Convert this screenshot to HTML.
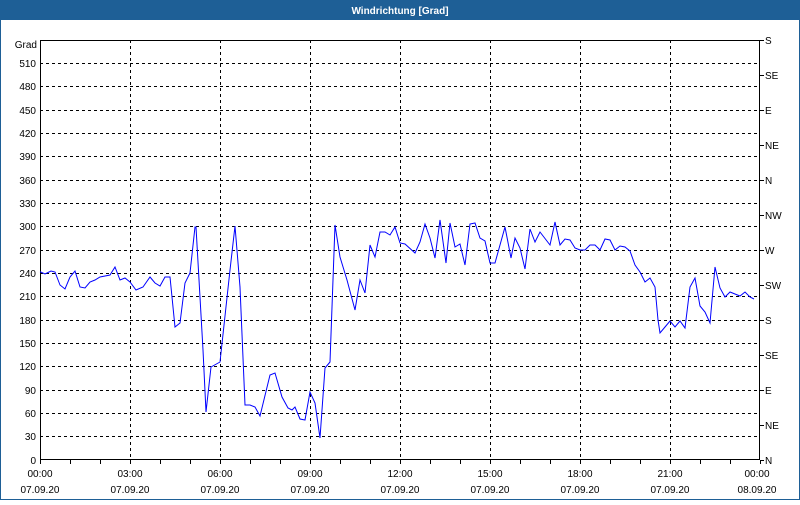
<!DOCTYPE html>
<html><head><meta charset="utf-8"><style>
body{margin:0;width:800px;height:500px;overflow:hidden;background:#fff;font-family:"Liberation Sans",sans-serif}
</style></head><body>
<svg width="800" height="500" xmlns="http://www.w3.org/2000/svg" font-family="Liberation Sans, sans-serif" font-size="10">
<rect x="0" y="0" width="800" height="500" fill="#fff"/>
<rect x="0.5" y="0.5" width="799" height="499" fill="none" stroke="#1e5f96"/>
<rect x="0" y="0" width="800" height="20" fill="#1e5f96"/>
<text x="400" y="14" text-anchor="middle" fill="#fff" font-weight="bold" font-size="10">Windrichtung [Grad]</text>
<g stroke="#000" stroke-dasharray="3,3" stroke-width="1">
<line x1="40" x2="760" y1="436.5" y2="436.5"/><line x1="40" x2="760" y1="413.5" y2="413.5"/>
<line x1="40" x2="760" y1="390.5" y2="390.5"/><line x1="40" x2="760" y1="366.5" y2="366.5"/>
<line x1="40" x2="760" y1="343.5" y2="343.5"/><line x1="40" x2="760" y1="320.5" y2="320.5"/>
<line x1="40" x2="760" y1="296.5" y2="296.5"/><line x1="40" x2="760" y1="273.5" y2="273.5"/>
<line x1="40" x2="760" y1="250.5" y2="250.5"/><line x1="40" x2="760" y1="226.5" y2="226.5"/>
<line x1="40" x2="760" y1="203.5" y2="203.5"/><line x1="40" x2="760" y1="180.5" y2="180.5"/>
<line x1="40" x2="760" y1="156.5" y2="156.5"/><line x1="40" x2="760" y1="133.5" y2="133.5"/>
<line x1="40" x2="760" y1="110.5" y2="110.5"/><line x1="40" x2="760" y1="86.5" y2="86.5"/>
<line x1="40" x2="760" y1="63.5" y2="63.5"/>
<line y1="40" y2="460" x1="130.5" x2="130.5"/><line y1="40" y2="460" x1="220.5" x2="220.5"/>
<line y1="40" y2="460" x1="310.5" x2="310.5"/><line y1="40" y2="460" x1="400.5" x2="400.5"/>
<line y1="40" y2="460" x1="490.5" x2="490.5"/><line y1="40" y2="460" x1="580.5" x2="580.5"/>
<line y1="40" y2="460" x1="670.5" x2="670.5"/>
</g>
<rect x="40.5" y="40.5" width="719" height="419" fill="none" stroke="#000"/>
<g stroke="#000">
<path d="M70.5 460v4M100.5 460v4M130.5 460v4M160.5 460v4M190.5 460v4M220.5 460v4M250.5 460v4M280.5 460v4M310.5 460v4M340.5 460v4M370.5 460v4M400.5 460v4M430.5 460v4M460.5 460v4M490.5 460v4M520.5 460v4M550.5 460v4M580.5 460v4M610.5 460v4M640.5 460v4M670.5 460v4M700.5 460v4M730.5 460v4M40.5 460v4M760.5 460v4"/>
<path d="M760 40.5h4M760 75.5h4M760 110.5h4M760 145.5h4M760 180.5h4M760 215.5h4M760 250.5h4M760 285.5h4M760 320.5h4M760 355.5h4M760 390.5h4M760 425.5h4M760 460.5h4"/>
</g>
<g text-anchor="end" fill="#000">
<text x="37" y="48">Grad</text>
<text x="36" y="67">510</text><text x="36" y="90">480</text><text x="36" y="114">450</text><text x="36" y="137">420</text>
<text x="36" y="160">390</text><text x="36" y="184">360</text><text x="36" y="207">330</text><text x="36" y="230">300</text>
<text x="36" y="254">270</text><text x="36" y="277">240</text><text x="36" y="300">210</text><text x="36" y="324">180</text>
<text x="36" y="347">150</text><text x="36" y="370">120</text><text x="36" y="394">90</text><text x="36" y="417">60</text>
<text x="36" y="440">30</text><text x="36" y="464">0</text>
</g>
<g fill="#000">
<text x="765" y="44">S</text><text x="765" y="79">SE</text><text x="765" y="114">E</text><text x="765" y="149">NE</text>
<text x="765" y="184">N</text><text x="765" y="219">NW</text><text x="765" y="254">W</text><text x="765" y="289">SW</text>
<text x="765" y="324">S</text><text x="765" y="359">SE</text><text x="765" y="394">E</text><text x="765" y="429">NE</text>
<text x="765" y="464">N</text>
</g>
<g text-anchor="middle" fill="#000">
<text x="40" y="477">00:00</text><text x="40" y="493">07.09.20</text>
<text x="130" y="477">03:00</text><text x="130" y="493">07.09.20</text>
<text x="220" y="477">06:00</text><text x="220" y="493">07.09.20</text>
<text x="310" y="477">09:00</text><text x="310" y="493">07.09.20</text>
<text x="400" y="477">12:00</text><text x="400" y="493">07.09.20</text>
<text x="490" y="477">15:00</text><text x="490" y="493">07.09.20</text>
<text x="580" y="477">18:00</text><text x="580" y="493">07.09.20</text>
<text x="670" y="477">21:00</text><text x="670" y="493">07.09.20</text>
<text x="757" y="477">00:00</text><text x="757" y="493">08.09.20</text>
</g>
<polyline fill="none" stroke="#0000ff" stroke-width="1" points="
40,271.7 45,274 51,271 55,272 60,285 65,289 70,277 75,271 80,287 85,288 90,282 95,280 100,277 110,275 115,267 120,280 125,278 130,282 136,290 143,287 150,277 155,283 160,286 165,277 170,277 175,327 180,323 185,283 190,273 195,227 196,227 203,350 206,412 211,367 220,362 230,270 235,226 240,287
245,405 250,405 255,407 260,416 270,375 275,373 282,397 288,408 292,410 295,407 300,419 305,420 310,392 315,403 320,438 325,368 330,362 335,225 340,257 347,280 355,310 360,280 365,293 370,245 375,257 380,232 385,232 390,235 395,227 400,243 405,244 415,253 420,242 425,224
430,238 435,258 440,220 446,263 450,223 455,247 460,244 465,265 470,224 475,223 480,238 485,241 490,263 495,263 505,227 511,258 515,238 520,248 525,269 530,229 535,242 540,232 550,245 555,222 560,245 565,239 570,240 575,248 580,250 585,250 590,245 595,245 600,250
605,239 610,240 615,250 620,246 625,247 630,251 635,265 640,272 645,282 650,278 655,287 658,320 660,333 665,327 670,321 675,327 680,321 685,328 690,287 695,278 700,306 705,312 710,323 715,267 720,288 725,297 730,292 740,296 745,292 750,297 754,299"/>
</svg>
</body></html>
